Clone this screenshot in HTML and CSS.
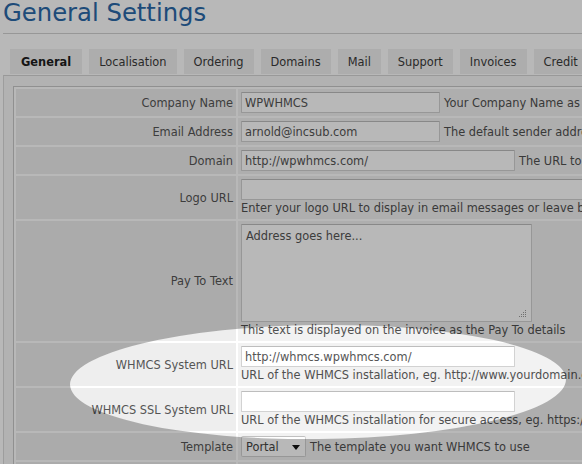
FILE: index.html
```html
<!DOCTYPE html>
<html>
<head>
<meta charset="utf-8">
<link rel="stylesheet" href="styles.css">
</head>
<body>
<div class="page">
  <h1 class="title">General Settings</h1>
  <ul class="tabs">
    <li class="tab active">General</li>
    <li class="tab">Localisation</li>
    <li class="tab">Ordering</li>
    <li class="tab">Domains</li>
    <li class="tab">Mail</li>
    <li class="tab">Support</li>
    <li class="tab">Invoices</li>
    <li class="tab">Credit</li>
    <li class="tab">Affiliates</li>
    <li class="tab">Security</li>
  </ul>
  <div class="tabbox">
    <table class="form">
      <tr>
        <td class="label">Company Name</td>
        <td class="field"><div class="inline"><input class="input w-sm" type="text" value="WPWHMCS"><span class="help">Your Company Name as you want it to appear throughout the system</span></div></td>
      </tr>
      <tr>
        <td class="label">Email Address</td>
        <td class="field"><div class="inline"><input class="input w-sm" type="text" value="arnold@incsub.com"><span class="help">The default sender address used for emails sent by WHMCS</span></div></td>
      </tr>
      <tr>
        <td class="label">Domain</td>
        <td class="field"><div class="inline"><input class="input w-md" type="text" value="http://wpwhmcs.com/"><span class="help">The URL to your website homepage</span></div></td>
      </tr>
      <tr>
        <td class="label">Logo URL</td>
        <td class="field"><input class="input block w-lg" type="text" value=""><div class="help-line">Enter your logo URL to display in email messages or leave blank for none</div></td>
      </tr>
      <tr>
        <td class="label">Pay To Text</td>
        <td class="field">
          <div class="area-wrap">
            <textarea class="area">Address goes here...</textarea>
            <svg class="grip" width="8" height="8" viewBox="0 0 8 8"><g fill="#9a9a9a"><rect x="6" y="0" width="1" height="1"/><rect x="4" y="2" width="1" height="1"/><rect x="6" y="2" width="1" height="1"/><rect x="2" y="4" width="1" height="1"/><rect x="4" y="4" width="1" height="1"/><rect x="6" y="4" width="1" height="1"/><rect x="0" y="6" width="1" height="1"/><rect x="2" y="6" width="1" height="1"/><rect x="4" y="6" width="1" height="1"/><rect x="6" y="6" width="1" height="1"/></g></svg>
          </div>
          <div class="help-line">This text is displayed on the invoice as the Pay To details</div>
        </td>
      </tr>
      <tr>
        <td class="label">WHMCS System URL</td>
        <td class="field"><input class="input block w-md" type="text" value="http://whmcs.wpwhmcs.com/"><div class="help-line">URL of the WHMCS installation, eg. http://www.yourdomain.com/members/</div></td>
      </tr>
      <tr>
        <td class="label">WHMCS SSL System URL</td>
        <td class="field"><input class="input block w-md" type="text" value=""><div class="help-line">URL of the WHMCS installation for secure access, eg. https://www.yourdomain.com/members/</div></td>
      </tr>
      <tr>
        <td class="label">Template</td>
        <td class="field"><div class="inline"><div class="select"><span>Portal</span><span class="arrow"></span></div><span class="help">The template you want WHMCS to use</span></div></td>
      </tr>
      <tr>
        <td class="label">Limit Activity Log</td>
        <td class="field"><div class="inline"><input class="input w-xs" type="text" value="10000"><span class="help">The Maximum Number of System Level Activity Log Entries to Retain</span></div></td>
      </tr>
    </table>
  </div>
  <div class="spotlight"></div>
</div>
</body>
</html>
```

FILE: styles.css
```css
html, body {
  margin: 0;
  padding: 0;
  overflow: hidden;
  background: #ffffff;
}

body {
  font-family: "DejaVu Sans", Verdana, sans-serif;
  font-size: 11.4px;
  color: #555555;
}

.page {
  position: relative;
  width: 1000px;
  height: 464px;
  padding-left: 3px;
}

.title {
  margin: 0;
  padding: 0 0 7px 0;
  height: 26px;
  line-height: 26px;
  font-size: 24.3px;
  font-weight: normal;
  color: #2a68a8;
  border-bottom: 1px solid #d2d2d2;
}

.tabs {
  list-style: none;
  margin: 15px 0 1px 0;
  padding: 0;
  display: flex;
  height: 25px;
}

.tab {
  box-sizing: border-box;
  margin-left: 7px;
  padding: 2px 10px 0 10px;
  height: 25px;
  line-height: 23px;
  background: #f0f0f0;
  color: #3a3a3a;
  white-space: nowrap;
}

.tab.active {
  font-weight: bold;
  color: #1e1e1e;
  padding: 2px 11px 0 11px;
}

.tabbox {
  border-top: 1px solid #d4d4d4;
  border-left: 1px solid #dadada;
  background: #f7f7f7;
  padding: 10px 0 20px 9px;
}

.form {
  border: 1px solid #c8c8c8;
  border-spacing: 2px;
  background: #ffffff;
  width: 960px;
}

.form td {
  padding: 3px;
  white-space: nowrap;
}

.label {
  width: 220px;
  box-sizing: border-box;
  text-align: right;
  vertical-align: middle;
  background: #eeeeee;
  color: #555555;
}

.field {
  background: #f2f2f2;
  vertical-align: middle;
}

.inline {
  display: flex;
  align-items: center;
  gap: 4px;
  height: 21px;
}

.input {
  box-sizing: border-box;
  height: 21px;
  margin: 0;
  padding: 0 3px;
  border: 1px solid #d2d2d2;
  border-top-color: #bdbdbd;
  border-radius: 1px;
  background: #ffffff;
  font-family: "DejaVu Sans", Verdana, sans-serif;
  font-size: 11.4px;
  color: #555555;
  outline: none;
}

.block {
  display: block;
}

.w-xs { width: 80px; }
.w-sm { width: 199px; }
.w-md { width: 274px; }
.w-lg { width: 420px; }

.help {
  color: #505050;
}

.help-line {
  height: 16px;
  line-height: 16px;
  color: #505050;
}

.area-wrap {
  position: relative;
  width: 291px;
  height: 98px;
}

.area {
  display: block;
  box-sizing: border-box;
  width: 291px;
  height: 98px;
  margin: 0;
  padding: 4px 4px;
  border: 1px solid #d2d2d2;
  border-top-color: #bdbdbd;
  border-radius: 1px;
  background: #ffffff;
  font-family: "DejaVu Sans", Verdana, sans-serif;
  font-size: 11.4px;
  line-height: 14px;
  color: #555555;
  resize: none;
  outline: none;
}

.grip {
  position: absolute;
  right: 5px;
  bottom: 4px;
}

.select {
  box-sizing: border-box;
  width: 65px;
  height: 21px;
  border: 1px solid #d2d2d2;
  border-top-color: #c0c0c0;
  border-radius: 2px;
  background: #ffffff;
  display: flex;
  align-items: center;
  justify-content: space-between;
  padding: 0 5px 0 4px;
  color: #444444;
}

.arrow {
  width: 0;
  height: 0;
  border-left: 4px solid transparent;
  border-right: 4px solid transparent;
  border-top: 5px solid #111111;
  margin-top: 1px;
}

.spotlight {
  position: absolute;
  left: 70px;
  top: 325px;
  width: 496px;
  height: 114px;
  border-radius: 50%;
  transform: rotate(-0.6deg);
  box-shadow: 0 0 2px 3000px rgba(0, 0, 0, 0.278);
  pointer-events: none;
}
```
